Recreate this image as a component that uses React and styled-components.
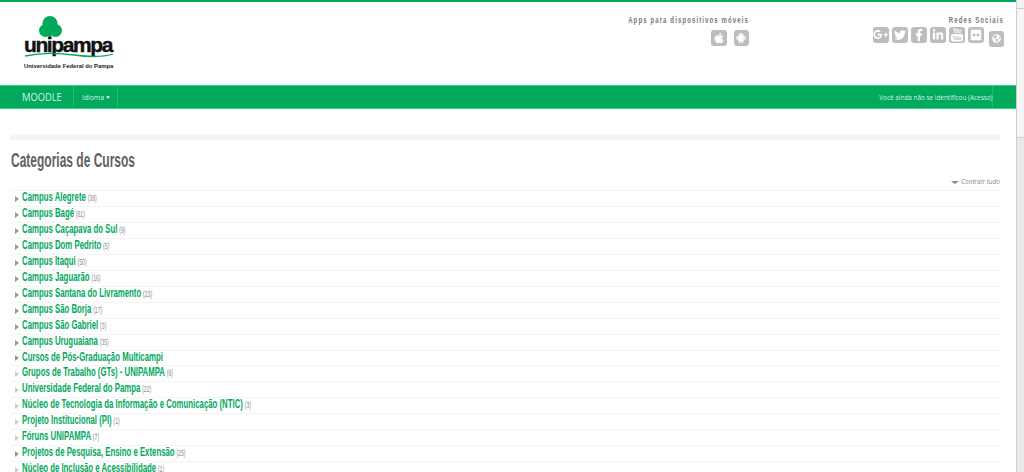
import React from "react";
import styled, { createGlobalStyle } from "styled-components";
import { FaApple, FaGooglePlusG, FaTwitter, FaFacebookF, FaLinkedinIn, FaFlickr, FaGlobeAmericas } from "react-icons/fa";
import { AiFillAndroid } from "react-icons/ai";

const categories = [
    { name: "Campus Alegrete", count: 38, open: true },
    { name: "Campus Bagé", count: 61, open: true },
    { name: "Campus Caçapava do Sul", count: 9, open: true },
    { name: "Campus Dom Pedrito", count: 5, open: true },
    { name: "Campus Itaqui", count: 50, open: true },
    { name: "Campus Jaguarão", count: 16, open: true },
    { name: "Campus Santana do Livramento", count: 23, open: true },
    { name: "Campus São Borja", count: 17, open: true },
    { name: "Campus São Gabriel", count: 3, open: true },
    { name: "Campus Uruguaiana", count: 35, open: true },
    { name: "Cursos de Pós-Graduação Multicampi", open: true, short: true },
    { name: "Grupos de Trabalho (GTs) - UNIPAMPA", count: 6 },
    { name: "Universidade Federal do Pampa", count: 22 },
    { name: "Núcleo de Tecnologia da Informação e Comunicação (NTIC)", count: 3 },
    { name: "Projeto Institucional (PI)", count: 1 },
    { name: "Fóruns UNIPAMPA", count: 7 },
    { name: "Projetos de Pesquisa, Ensino e Extensão", count: 25, open: true },
    { name: "Núcleo de Inclusão e Acessibilidade", count: 1 },
];

const YoutubeGlyph = () => (
    <svg width="14" height="15" viewBox="0 0 14 15">
        <text x="7" y="5.5" textAnchor="middle" fontSize="6.5" fontWeight="bold" fontFamily="Liberation Sans" fill="#fff" textLength="8" lengthAdjust="spacingAndGlyphs">You</text>
        <rect x="1" y="7" width="12" height="7.5" rx="2" fill="#fff" />
        <text x="7" y="12.6" textAnchor="middle" fontSize="5.5" fontWeight="bold" fontFamily="Liberation Sans" fill="#bdbdbd" textLength="9" lengthAdjust="spacingAndGlyphs">Tube</text>
    </svg>
);

const App = () => {
    return (
        <Screen>
            <GlobalStyle />
            <Page>
                <Header>
                    <Logo>
                        <svg width="90" height="23" viewBox="0 0 90 23">
                            <circle cx="26" cy="7.5" r="7.5" fill="#00a95c" />
                            <circle cx="21.5" cy="14.5" r="6.5" fill="#00a95c" />
                            <circle cx="31.5" cy="14.5" r="6.5" fill="#00a95c" />
                            <rect x="24.5" y="14" width="3" height="9" fill="#00a95c" />
                        </svg>
                        <LogoName>unipampa</LogoName>
                        <svg width="90" height="6" viewBox="0 0 90 6">
                            <path d="M1 4 C20 0 35 1 50 3 S80 5 89 2" fill="none" stroke="#00a95c" strokeWidth="1.3" />
                        </svg>
                        <LogoSub>Universidade Federal do Pampa</LogoSub>
                    </Logo>
                    <Apps>
                        <HeadLabel>Apps para dispositivos móveis</HeadLabel>
                        <IconRow>
                            <IconBox><FaApple /></IconBox>
                            <IconBox><AiFillAndroid /></IconBox>
                        </IconRow>
                    </Apps>
                    <Social>
                        <HeadLabel>Redes Sociais</HeadLabel>
                        <IconRow $tight>
                            <IconBox $big><FaGooglePlusG /></IconBox>
                            <IconBox><FaTwitter /></IconBox>
                            <IconBox><FaFacebookF /></IconBox>
                            <IconBox><FaLinkedinIn /></IconBox>
                            <IconBox><YoutubeGlyph /></IconBox>
                            <IconBox><FaFlickr /></IconBox>
                            <IconBox $low><FaGlobeAmericas /></IconBox>
                        </IconRow>
                    </Social>
                </Header>
                <Navbar>
                    <Brand><Narrow>MOODLE</Narrow></Brand>
                    <NavItem><Narrow>Idioma</Narrow><Caret /></NavItem>
                    <Login><NarrowRight>Você ainda não se identificou (Acesso)</NarrowRight></Login>
                </Navbar>
                <Main>
                    <Stripe />
                    <Title><TitleText>Categorias de Cursos</TitleText></Title>
                    <Collapse><DownArrow /><CollapseText>Contrair tudo</CollapseText></Collapse>
                    <List>
                        {categories.map((item) => (
                            <Row key={item.name} $short={item.short}>
                                <Arrow $open={item.open} />
                                <RowText $short={item.short}>
                                    <CategoryLink>{item.name}</CategoryLink>
                                    {item.count && <Count>({item.count})</Count>}
                                </RowText>
                            </Row>
                        ))}
                    </List>
                </Main>
            </Page>
            <Scrollbar>
                <ScrollButton />
                <Thumb />
            </Scrollbar>
        </Screen>
    );
};

const GlobalStyle = createGlobalStyle`
    html, body {
        margin: 0;
        height: 100%;
        overflow: hidden;
        background: #fff;
    }
    body {
        font-family: "Liberation Sans", sans-serif;
    }
`;

const Screen = styled.div`
    display: flex;
    width: 1024px;
    height: 472px;
    overflow: hidden;
`;

const Page = styled.div`
    width: 1016px;
    flex: none;
    border-top: 2px solid #00a95c;
    box-sizing: border-box;
`;

const Header = styled.header`
    height: 83px;
    display: flex;
    align-items: flex-start;
`;

const Logo = styled.div`
    width: 90px;
    margin: 14px 0 0 24px;
    display: flex;
    flex-direction: column;
    svg { display: block; }
`;

const LogoName = styled.div`
    font: bold 21px/15px "Liberation Sans", sans-serif;
    letter-spacing: -1.4px;
    color: #111;
    margin-top: -2px;
    height: 15px;
    -webkit-text-stroke: 0.4px #111;
`;

const LogoSub = styled.div`
    font: bold 5.9px/7px "Liberation Sans", sans-serif;
    color: #222;
    white-space: nowrap;
    margin-top: 5px;
`;

const Apps = styled.div`
    width: 220px;
    margin: 12px 0 0 415px;
    text-align: right;
`;

const Social = styled.div`
    width: 134px;
    margin: 12px 0 0 121px;
    text-align: right;
`;

const HeadLabel = styled.div`
    font: bold 9px/13px "Liberation Sans", sans-serif;
    letter-spacing: 1.65px;
    color: #777;
    white-space: nowrap;
    transform: scaleX(0.67);
    transform-origin: right center;
`;

const IconRow = styled.div`
    display: flex;
    justify-content: flex-end;
    gap: ${(p) => (p.$tight ? "3.5px" : "7px")};
    margin-top: ${(p) => (p.$tight ? "0" : "3px")};
`;

const IconBox = styled.span`
    width: 15.5px;
    height: 15.5px;
    flex: none;
    margin-top: ${(p) => (p.$low ? "4px" : "0")};
    margin-left: ${(p) => (p.$low ? "1.5px" : "0")};
    background: #bdbdbd;
    border-radius: 3px;
    color: #fff;
    font-size: ${(p) => (p.$big ? "15px" : p.$low ? "9px" : "12px")};
    display: flex;
    align-items: center;
    justify-content: center;
`;

const Navbar = styled.nav`
    height: 24px;
    box-sizing: border-box;
    background: #00a95c;
    border-top: 1px solid #2fd487;
    border-bottom: 1px solid #2fd487;
    display: flex;
    align-items: stretch;
    color: #d4f3e4;
`;

const Narrow = styled.span`
    display: inline-block;
    transform: scaleX(0.85);
    transform-origin: left center;
`;

const NarrowRight = styled(Narrow)`
    transform: scaleX(0.8);
    transform-origin: right center;
`;

const Brand = styled.div`
    width: 73px;
    box-sizing: border-box;
    padding-left: 22px;
    font: 11px/22px "Open Sans", sans-serif;
`;

const NavItem = styled.div`
    width: 45px;
    box-sizing: border-box;
    padding-left: 8px;
    border-left: 1px solid #19bd70;
    border-right: 1px solid #19bd70;
    font: 8px/22px "Open Sans", sans-serif;
    white-space: nowrap;
`;

const Caret = styled.span`
    display: inline-block;
    vertical-align: middle;
    margin-left: -2px;
    border-top: 3px solid #d4f3e4;
    border-left: 2.5px solid transparent;
    border-right: 2.5px solid transparent;
`;

const Login = styled.div`
    margin-left: auto;
    width: 115px;
    margin-right: 23px;
    box-sizing: border-box;
    border-right: 1px solid #19bd70;
    font: 8px/22px "Open Sans", sans-serif;
    white-space: nowrap;
    display: flex;
    justify-content: flex-end;
`;

const Main = styled.main`
    padding: 25px 16px 0 10px;
`;

const Stripe = styled.div`
    height: 6px;
    background: repeating-linear-gradient(90deg, #f1f1f1 0 1px, #f9f9f9 1px 2px);
`;

const Title = styled.h2`
    margin: 8px 0 0;
    font: bold 20px/24px "Liberation Sans", sans-serif;
    color: #616161;
    white-space: nowrap;
`;

const TitleText = styled.span`
    display: inline-block;
    margin-left: 1px;
    transform: scaleX(0.6);
    transform-origin: left center;
`;

const Collapse = styled.div`
    margin-top: 4px;
    height: 12px;
    display: flex;
    align-items: center;
    justify-content: flex-end;
    font: italic 6.5px/12px "Open Sans", sans-serif;
    color: #888;
`;

const CollapseText = styled.span`
    white-space: nowrap;
`;

const DownArrow = styled.span`
    margin-right: 2px;
    border-top: 3px solid #888;
    border-left: 4px solid transparent;
    border-right: 4px solid transparent;
`;

const List = styled.div`
    margin-top: 2px;
`;

const Row = styled.div`
    height: ${(p) => (p.$short ? "15px" : "16px")};
    box-sizing: border-box;
    border-top: 1px solid #f4f4f4;
    display: flex;
    align-items: center;
    white-space: nowrap;
`;

const Arrow = styled.span`
    width: 0;
    height: 0;
    margin: 0 3px 0 5px;
    flex: none;
    border-left: 4px solid ${(p) => (p.$open ? "#999" : "#ccc")};
    border-top: 3px solid transparent;
    border-bottom: 3px solid transparent;
`;

const RowText = styled.div`
    display: flex;
    align-items: baseline;
    margin-top: ${(p) => (p.$short ? "-2px" : "-4px")};
    transform: scaleX(0.6);
    transform-origin: left center;
`;

const CategoryLink = styled.a`
    font: bold 13px/14px "Liberation Sans", sans-serif;
    color: #00a95c;
`;

const Count = styled.span`
    margin-left: 3px;
    font: 8.5px/8px "Liberation Sans", sans-serif;
    color: #888;
`;

const Scrollbar = styled.aside`
    width: 8px;
    flex: none;
    background: #e8e8e8;
    border-left: 1px solid #d0d0d0;
    box-sizing: border-box;
`;

const ScrollButton = styled.div`
    height: 8px;
    background: #f4f4f4;
    border-bottom: 1px solid #ccc;
`;

const Thumb = styled.div`
    height: 128px;
    background: #f6f6f6;
    border-bottom: 1px solid #ccc;
    border-radius: 0 0 2px 2px;
`;

export default App;
